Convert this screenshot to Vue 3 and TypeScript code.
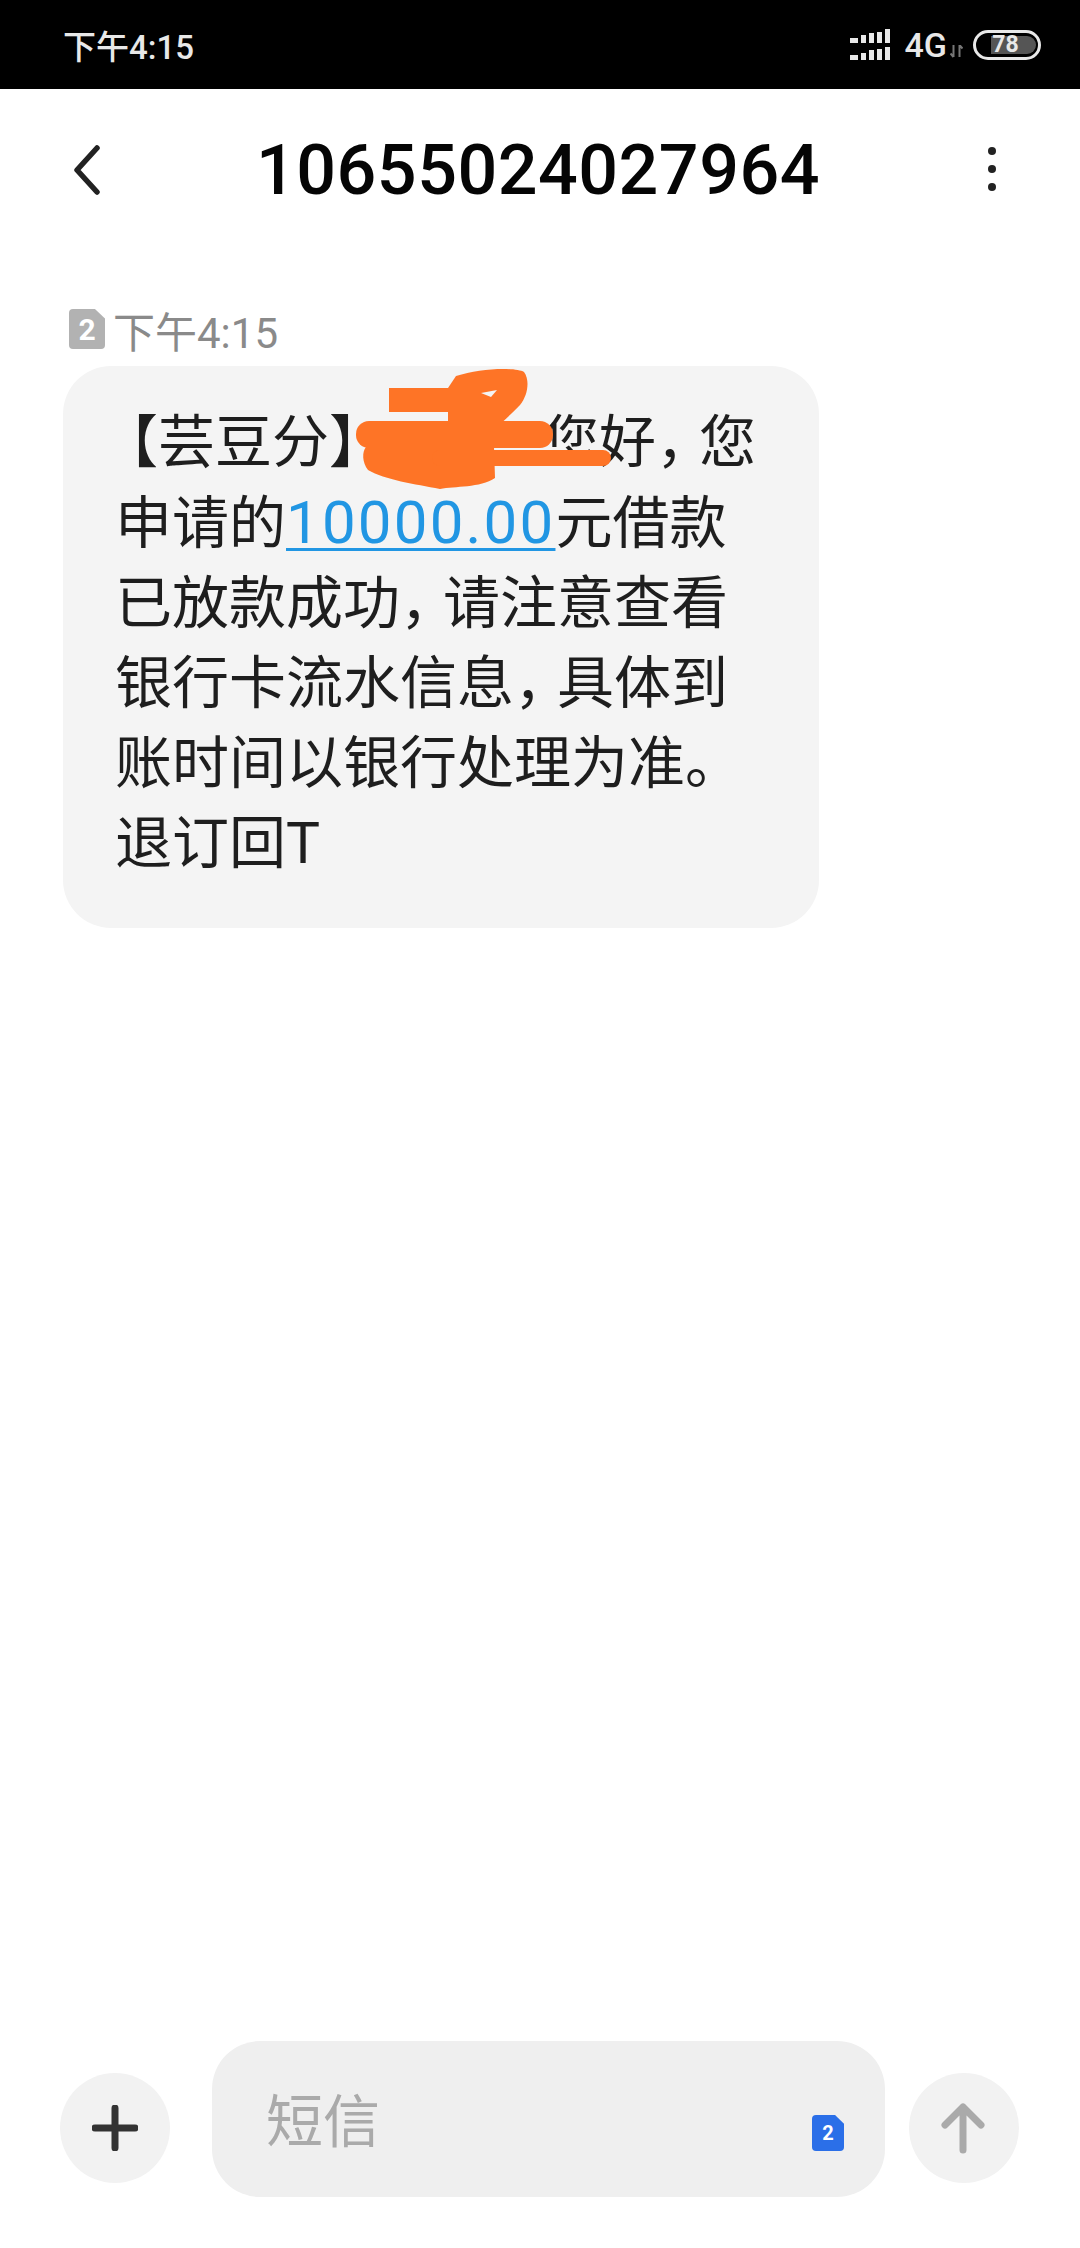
<script setup lang="ts">
const signalBars = [
  { x: 850, w: 8, top: 41 },
  { x: 861, w: 5, top: 38 },
  { x: 869, w: 5, top: 36 },
  { x: 877, w: 5, top: 35 },
  { x: 885, w: 5, top: 32 },
]
</script>

<template>
  <div class="page">
    <div class="status">
      <span class="clock">下午4:15</span>
      <div class="status-right">
        <svg class="signal" width="40" height="32" viewBox="850 32 40 32">
          <g fill="#e8e8e8">
            <rect v-for="b in signalBars" :key="b.x" :x="b.x" :y="b.top" :width="b.w" :height="46 - b.top" />
            <rect x="850" y="58" width="8" height="5" />
            <rect x="861" y="56" width="5" height="7" />
            <rect x="869" y="53" width="5" height="10" />
            <rect x="877" y="52" width="5" height="11" />
            <rect x="885" y="50" width="5" height="13" />
          </g>
        </svg>
        <span class="net">4G</span>
        <svg class="arrows" width="13" height="13" viewBox="0 0 13 13">
          <path d="M3.5 0V12M0.5 8.5L3.5 12M9.5 12V0M9.5 0L12.5 3.5" stroke="#777" stroke-width="2" fill="none" />
        </svg>
        <div class="battery">
          <div class="battery-fill" />
          <span>78</span>
        </div>
      </div>
    </div>

    <div class="header">
      <svg class="back" width="30" height="50" viewBox="0 0 30 50">
        <path d="M25 3L5 25L25 47" stroke="#222" stroke-width="5.5" stroke-linecap="round" stroke-linejoin="round" fill="none" />
      </svg>
      <h1>10655024027964</h1>
      <div class="dots">
        <i /><i /><i />
      </div>
    </div>

    <div class="thread">
      <div class="meta">
        <div class="sim grey">2</div>
        <span>下午4:15</span>
      </div>
      <div class="bubble">
        <span class="bracket">【</span>芸豆分】<span class="redacted" />您好<span class="comma">，</span>您<br />
        申请的<a class="amount">10000.00</a>元借款<br />
        已放款成功<span class="comma">，</span>请注意查看<br />
        银行卡流水信息<span class="comma">，</span>具体到<br />
        账时间以银行处理为准。<br />
        退订回T
        <svg class="scribble" width="280" height="140" viewBox="343 356 280 140">
          <g fill="#fe7426">
            <rect x="389" y="388" width="62" height="24" />
            <path d="M448 388L456 376C480 368 515 367 524 372C530 380 528 395 520 405C510 415 505 420 495 428L448 428Z" />
            <rect x="356" y="421" width="197" height="27" rx="13" />
            <path d="M366 447H494L495 478C480 488 455 486 440 489C415 484 385 480 368 470C362 462 362 452 366 447Z" />
          </g>
          <path d="M440 458H603" stroke="#fe7426" stroke-width="16" stroke-linecap="round" />
          <path d="M481 393L497 390L491 397Z" fill="#f4f4f4" />
        </svg>
      </div>
    </div>

    <div class="composer">
      <button class="round">
        <svg width="46" height="46" viewBox="0 0 46 46">
          <path d="M3 23H43M23 3V43" stroke="#333" stroke-width="7" stroke-linecap="round" />
        </svg>
      </button>
      <div class="input">
        <span class="placeholder">短信</span>
        <div class="sim blue">2</div>
      </div>
      <button class="round">
        <svg width="50" height="58" viewBox="0 0 50 58">
          <path d="M24 8V51M6 26L24 8L42 26" stroke="#aaa" stroke-width="7" stroke-linecap="round" stroke-linejoin="round" fill="none" />
        </svg>
      </button>
    </div>
  </div>
</template>

<style>
html,
body {
  background: #fff;
}
</style>

<style scoped>
.page {
  display: flex;
  flex-direction: column;
  height: 2248px;
  font-family: Roboto, "Noto Sans CJK SC", sans-serif;
  background: #fff;
  color: #222;
}

.status {
  display: flex;
  align-items: center;
  justify-content: space-between;
  height: 89px;
  padding: 0 39px 0 63px;
  background: #000;
  color: #e8e8e8;
  box-sizing: border-box;
}

.clock {
  font-size: 33px;
  font-weight: 500;
}

.status-right {
  display: flex;
  align-items: center;
}

.net {
  margin-left: 15px;
  font-size: 34px;
  font-weight: 500;
}

.arrows {
  margin: 13px 10px 0 3px;
}

.battery {
  position: relative;
  display: flex;
  align-items: center;
  justify-content: center;
  width: 68px;
  height: 30px;
  border: 3px solid #e8e8e8;
  border-radius: 16px;
  box-sizing: border-box;
  font-size: 23px;
  font-weight: 700;
}

.battery-fill {
  position: absolute;
  left: 15px;
  top: 3px;
  width: 45px;
  height: 18px;
  border-radius: 0 9px 9px 0;
  background: #555;
}

.battery span {
  position: relative;
  margin-left: -3px;
}

.header {
  position: relative;
  display: flex;
  align-items: center;
  justify-content: center;
  height: 160px;
  padding-top: 1px;
  box-sizing: border-box;
}

.back {
  position: absolute;
  left: 72px;
  top: 56px;
}

.header h1 {
  margin: 0 0 0 -4px;
  font-size: 70px;
  font-weight: 500;
  letter-spacing: 0.5px;
  color: #050505;
}

.dots {
  position: absolute;
  left: 988px;
  top: 58px;
  display: flex;
  flex-direction: column;
  gap: 10px;
}

.dots i {
  width: 8px;
  height: 8px;
  border-radius: 50%;
  background: #222;
}

.thread {
  flex: 1;
  padding: 60px 0 0 63px;
}

.meta {
  display: flex;
  align-items: center;
  gap: 8px;
  height: 40px;
  margin-bottom: 17px;
  padding-left: 6px;
  font-size: 42px;
  color: #8a8a8a;
}

.sim {
  display: flex;
  align-items: center;
  justify-content: center;
  font-weight: 700;
  color: #fff;
  clip-path: polygon(0 0, 72% 0, 100% 24%, 100% 100%, 0 100%);
  border-radius: 4px;
}

.sim.grey {
  width: 36px;
  height: 40px;
  background: #b2b2b2;
  font-size: 30px;
}

.sim.blue {
  width: 32px;
  height: 36px;
  margin-top: 28px;
  background: #2b6fe8;
  font-size: 20px;
}

.bubble {
  position: relative;
  width: 756px;
  height: 562px;
  padding: 37px 0 0 52px;
  border-radius: 48px;
  background: #f4f4f4;
  box-sizing: border-box;
  font-size: 57px;
  line-height: 80px;
  color: #1e1e1e;
}

.bracket {
  margin-left: -14px;
}

.redacted {
  display: inline-block;
  width: 156px;
}

.comma {
  letter-spacing: -14px;
}

.amount {
  font-size: 60px;
  letter-spacing: 2.2px;
  color: #2196e3;
  text-decoration: underline;
  text-decoration-thickness: 3px;
  text-underline-offset: 5px;
}

.scribble {
  position: absolute;
  left: 280px;
  top: -10px;
}

.composer {
  display: flex;
  align-items: flex-end;
  padding: 0 61px 51px 60px;
}

.round {
  display: flex;
  align-items: center;
  justify-content: center;
  width: 110px;
  height: 110px;
  margin-bottom: 14px;
  padding: 0;
  border: none;
  border-radius: 50%;
  background: #f2f2f2;
}

.input {
  display: flex;
  flex: 1;
  align-items: center;
  justify-content: space-between;
  height: 156px;
  margin: 0 24px 0 42px;
  padding: 0 41px 0 54px;
  border-radius: 48px;
  background: #efefef;
  box-sizing: border-box;
}

.placeholder {
  margin-top: -4px;
  font-size: 57px;
  color: #aaa;
}
</style>
